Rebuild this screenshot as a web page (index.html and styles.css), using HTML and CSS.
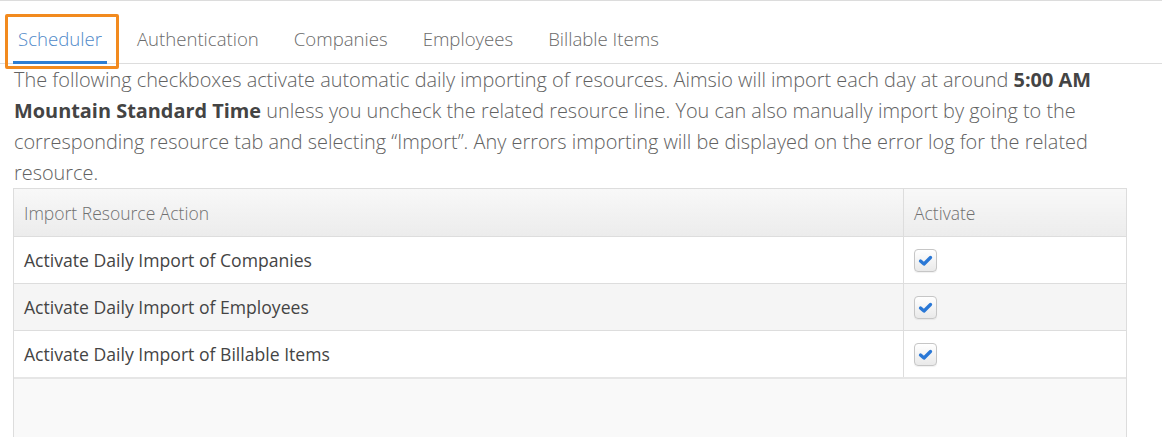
FILE: index.html
```html
<!DOCTYPE html>
<html>
<head>
<meta charset="utf-8">
<link rel="stylesheet" href="styles.css">
</head>
<body>
<div class="page">
  <nav class="tabs">
    <div class="tab active">Scheduler</div>
    <div class="tab">Authentication</div>
    <div class="tab">Companies</div>
    <div class="tab">Employees</div>
    <div class="tab">Billable Items</div>
  </nav>
  <div class="highlight"></div>
  <div class="content">
    <p class="intro">The following checkboxes activate automatic daily importing of resources. Aimsio will import each day at around <b>5:00 AM Mountain Standard Time</b> unless you uncheck the related resource line. You can also manually import by going to the corresponding resource tab and selecting “Import”. Any errors importing will be displayed on the error log for the related resource.</p>
    <div class="grid">
      <table class="table">
        <thead>
          <tr><th class="c1">Import Resource Action</th><th class="c2">Activate</th></tr>
        </thead>
        <tbody>
          <tr><td class="c1">Activate Daily Import of Companies</td><td class="c2"><span class="cb"><svg viewBox="0 0 23 23" width="23" height="23"><path d="M6.5 12 L10 15 L16.5 8.5" fill="none" stroke="#2a78d6" stroke-width="3.3" stroke-linecap="round" stroke-linejoin="round"/></svg></span></td></tr>
          <tr class="alt"><td class="c1">Activate Daily Import of Employees</td><td class="c2"><span class="cb"><svg viewBox="0 0 23 23" width="23" height="23"><path d="M6.5 12 L10 15 L16.5 8.5" fill="none" stroke="#2a78d6" stroke-width="3.3" stroke-linecap="round" stroke-linejoin="round"/></svg></span></td></tr>
          <tr><td class="c1">Activate Daily Import of Billable Items</td><td class="c2"><span class="cb"><svg viewBox="0 0 23 23" width="23" height="23"><path d="M6.5 12 L10 15 L16.5 8.5" fill="none" stroke="#2a78d6" stroke-width="3.3" stroke-linecap="round" stroke-linejoin="round"/></svg></span></td></tr>
        </tbody>
      </table>
    </div>
  </div>
</div>
</body>
</html>
```
FILE: styles.css
```css
html, body {
  margin: 0;
  padding: 0;
  background: #fff;
  height: 100%;
}
body {
  font-family: "Open Sans", "Liberation Sans", sans-serif;
  overflow: hidden;
}
.page {
  position: relative;
  border-top: 1px solid #dcdcdc;
  min-height: 100%;
  box-sizing: border-box;
  display: flex;
  flex-direction: column;
}
.tabs {
  display: flex;
  gap: 25px;
  padding-left: 13px;
  border-bottom: 1px solid #dddddd;
}
.tab {
  font-size: 18.6px;
  font-weight: 300;
  line-height: 24px;
  color: #6a6a6a;
  padding: 26px 5px 10px;
  border-bottom: 3px solid transparent;
  margin-bottom: -1px;
}
.tab.active {
  color: #4f89c9;
  border-bottom-color: #2d7ed3;
}
.highlight {
  position: absolute;
  left: 5px;
  top: 13px;
  width: 108px;
  height: 49px;
  border: 3px solid #f28a1e;
  border-radius: 2px;
}
.content {
  padding: 0 35px 0 13px;
  flex: 1;
  display: flex;
  flex-direction: column;
}
.intro {
  margin: 0;
  padding-left: 1px;
  font-size: 19.9px;
  font-weight: 300;
  line-height: 31px;
  color: #626262;
}
.intro b {
  font-weight: 700;
  color: #444;
}
.grid {
  flex: 1;
  background: #f9f9f9;
  border: 1px solid #dddddd;
  border-bottom: none;
}
.table {
  width: 100%;
  border-collapse: collapse;
  background: #fff;
}
.table th {
  height: 47px;
  text-align: left;
  font-weight: 300;
  font-size: 17.5px;
  color: #707070;
  padding: 0 10px;
  background: linear-gradient(#f8f8f8, #ececec);
  border-bottom: 1px solid #dddddd;
}
.table td {
  height: 46px;
  font-size: 17.6px;
  color: #444;
  padding: 0 10px;
  border-bottom: 1px solid #dddddd;
}
.table .c2 {
  width: 202px;
  border-left: 1px solid #dddddd;
}
.table tr.alt td {
  background: #f5f5f5;
}
.table tbody tr:last-child td {
  border-bottom: 2px solid #e6e6e6;
}
.cb {
  display: block;
  width: 23px;
  height: 23px;
  border: 1px solid #c6c6c6;
  border-radius: 4px;
  background: linear-gradient(#ffffff, #e9e9e9);
  box-shadow: 0 1px 1px rgba(0,0,0,0.06);
  box-sizing: border-box;
  position: relative;
}
.cb svg {
  position: absolute;
  left: -1px;
  top: -1px;
}
```
